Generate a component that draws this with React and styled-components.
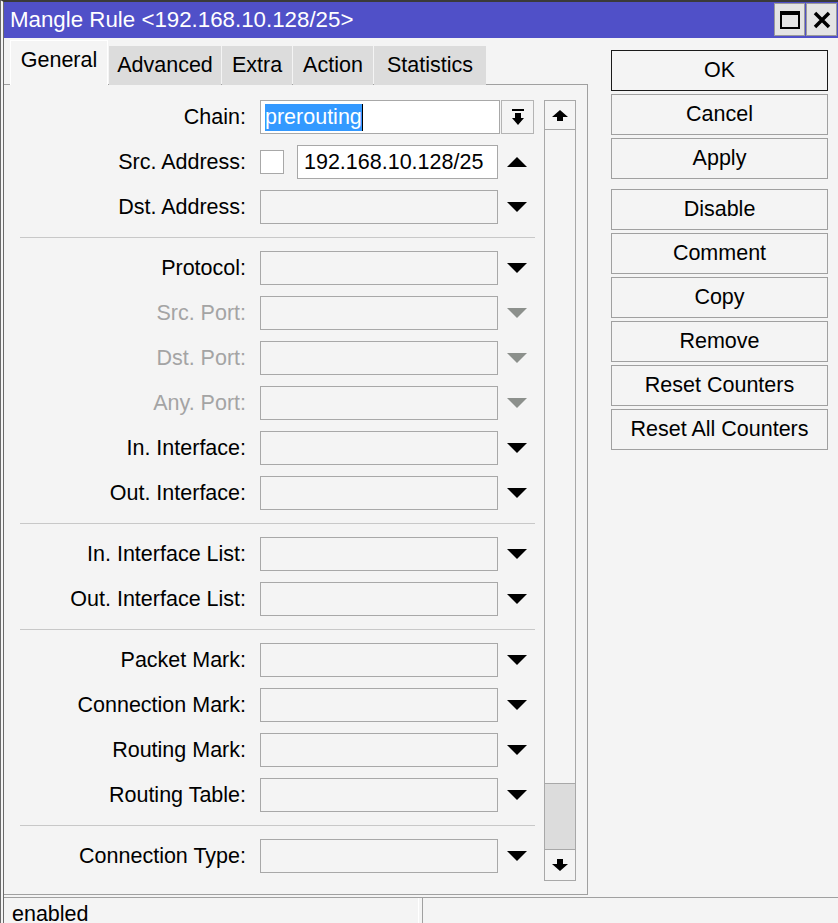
import React from 'react';
import styled, { createGlobalStyle } from 'styled-components';

const GlobalStyle = createGlobalStyle`
  html, body {
    margin: 0;
    padding: 0;
    background: #f4f4f4;
  }
  body {
    font-family: "Liberation Sans", Arial, sans-serif;
    font-size: 21.5px;
    color: #000;
  }
`;

const Window = styled.div`
  width: 838px;
  height: 923px;
  box-sizing: border-box;
  overflow: hidden;
  display: flex;
  flex-direction: column;
  background: #f4f4f4;
  border-top: 2px solid #3a3a3a;
  border-left: 4px double #6a6a6a;
`;

const TitleBar = styled.div`
  height: 36px;
  flex-shrink: 0;
  display: flex;
  align-items: center;
  background: #5050c8;
  color: #fff;
  font-size: 22.3px;
  padding-left: 6px;
`;

const TitleText = styled.span`
  white-space: nowrap;
`;

const WinButtons = styled.div`
  margin-left: auto;
  display: flex;
  gap: 1px;
  align-self: stretch;
  padding: 1px 1px 2px 0;
`;

const WinButton = styled.div`
  width: 29px;
  background: #e4e4e4;
  border: 1px solid #9a9a9a;
  display: flex;
  align-items: center;
  justify-content: center;
`;

const Body = styled.div`
  flex: none;
  display: flex;
  padding-top: 2px;
`;

const LeftCol = styled.div`
  width: 584px;
  display: flex;
  flex-direction: column;
`;

const TabBar = styled.div`
  height: 45px;
  display: flex;
  align-items: flex-end;
  gap: 1px;
  padding-left: 6px;
  margin-bottom: -1px;
`;

const Tab = styled.div`
  position: relative;
  z-index: 1;
  width: ${p => p.$w}px;
  height: ${p => (p.$active ? 45 : 39)}px;
  box-sizing: border-box;
  padding-bottom: ${p => (p.$active ? 6 : 0)}px;
  display: flex;
  align-items: center;
  justify-content: center;
  background: ${p => (p.$active ? '#f4f4f4' : '#dcdcdc')};
  border: ${p => (p.$active ? '1px solid #ffffff' : 'none')};
  border-bottom: none;
  white-space: nowrap;
`;

const Panel = styled.div`
  height: 811px;
  box-sizing: border-box;
  border: 1px solid #a0a0a0;
  border-left: none;
  display: flex;
  padding-top: 15px;
`;

const Form = styled.div`
  width: 531px;
  display: flex;
  flex-direction: column;
  gap: 11px;
`;

const Row = styled.div`
  height: 34px;
  display: flex;
  align-items: center;
`;

const Label = styled.div`
  width: 242px;
  margin-right: 14px;
  text-align: right;
  white-space: nowrap;
  color: ${p => (p.$disabled ? '#a4a4a4' : '#000')};
`;

const Field = styled.div`
  width: ${p => p.$w || 238}px;
  height: 34px;
  box-sizing: border-box;
  border: 1px solid #a8a8a8;
  background: ${p => (p.$white ? '#ffffff' : '#f4f4f4')};
  display: flex;
  align-items: center;
  padding-left: ${p => p.$pad || 0}px;
  white-space: nowrap;
`;

const Selected = styled.span`
  display: inline-block;
  height: 27px;
  line-height: 27px;
  background: #3399ff;
  color: #fff;
  border-right: 1px solid #000;
`;

const Check = styled.div`
  width: 24px;
  height: 24px;
  box-sizing: border-box;
  border: 1px solid #a8a8a8;
  background: #fff;
  margin-right: 13px;
`;

const ArrowCell = styled.div`
  width: 37px;
  display: flex;
  align-items: center;
  justify-content: center;
`;

const DropButton = styled.div`
  width: 33px;
  height: 34px;
  margin-left: 1px;
  box-sizing: border-box;
  border: 1px solid #b4b4b4;
  display: flex;
  align-items: center;
  justify-content: center;
`;

const Separator = styled.div`
  height: 1px;
  margin: 2px 0 2px 16px;
  background: #c8c8c8;
`;

const Scroll = styled.div`
  width: 32px;
  height: 781px;
  margin-left: 9px;
  box-sizing: border-box;
  border: 1px solid #a8a8a8;
  display: flex;
  flex-direction: column;
`;

const ScrollBtn = styled.div`
  height: ${p => p.$h}px;
  box-sizing: border-box;
  display: flex;
  align-items: center;
  justify-content: center;
  border-bottom: ${p => (p.$top ? '1px solid #a8a8a8' : 'none')};
`;

const Track = styled.div`
  flex: 1;
`;

const Thumb = styled.div`
  height: 67px;
  box-sizing: border-box;
  background: #dcdcdc;
  border-top: 1px solid #a8a8a8;
  border-bottom: 1px solid #a8a8a8;
`;

const RightCol = styled.div`
  margin-left: 23px;
  width: 217px;
  padding-top: 10px;
  display: flex;
  flex-direction: column;
  gap: 3px;
`;

const Button = styled.div`
  height: 41px;
  box-sizing: border-box;
  border: 1px solid ${p => (p.$default ? '#1a1a1a' : '#a0a0a0')};
  display: flex;
  align-items: center;
  justify-content: center;
  white-space: nowrap;
  margin-top: ${p => (p.$spaced ? 7 : 0)}px;
`;

const StatusBar = styled.div`
  margin-top: 2px;
  border-top: 1px solid #a0a0a0;
  flex: 1;
  display: flex;
  gap: 3px;
`;

const StatusCell = styled.div`
  width: ${p => (p.$grow ? 'auto' : '415px')};
  flex: ${p => (p.$grow ? 1 : 'none')};
  box-sizing: border-box;
  padding: 4px 0 0 8px;
  border-right: ${p => (p.$grow ? 'none' : '1px solid #ffffff')};
  border-left: ${p => (p.$grow ? '1px solid #a0a0a0' : 'none')};
  white-space: nowrap;
`;

const DownTri = ({ color = '#000' }) => (
  <svg width="20" height="10" viewBox="0 0 20 10">
    <polygon points="0,0 20,0 10,10" fill={color} />
  </svg>
);

const UpTri = () => (
  <svg width="20" height="10" viewBox="0 0 20 10">
    <polygon points="0,10 20,10 10,0" fill="#000" />
  </svg>
);

const ToBottomIcon = () => (
  <svg width="14" height="17" viewBox="0 0 14 17">
    <rect x="1" y="0" width="12" height="2" fill="#000" />
    <polygon points="4,4 10,4 10,9 13,9 7,16 1,9 4,9" fill="#000" />
  </svg>
);

const ArrowUp = () => (
  <svg width="16" height="11" viewBox="0 0 16 11">
    <polygon points="8,0 16,7 11,7 11,11 5,11 5,7 0,7" fill="#000" />
  </svg>
);

const ArrowDown = () => (
  <svg width="16" height="12" viewBox="0 0 16 12">
    <polygon points="5,0 11,0 11,5 16,5 8,12 0,5 5,5" fill="#000" />
  </svg>
);

const MaxIcon = () => (
  <svg width="20" height="20" viewBox="0 0 20 20">
    <rect x="1" y="2" width="18" height="16" fill="none" stroke="#000" strokeWidth="2" />
    <rect x="1" y="1" width="18" height="4" fill="#000" />
  </svg>
);

const CloseIcon = () => (
  <svg width="18" height="18" viewBox="0 0 18 18">
    <path d="M2 2 L16 16 M16 2 L2 16" stroke="#000" strokeWidth="3.5" />
  </svg>
);

const tabs = [
  { text: 'General', w: 98 },
  { text: 'Advanced', w: 112 },
  { text: 'Extra', w: 70 },
  { text: 'Action', w: 80 },
  { text: 'Statistics', w: 112 },
];

const rows = [
  { kind: 'chain', label: 'Chain:' },
  { kind: 'src', label: 'Src. Address:' },
  { label: 'Dst. Address:' },
  { kind: 'sep' },
  { label: 'Protocol:' },
  { label: 'Src. Port:', disabled: true },
  { label: 'Dst. Port:', disabled: true },
  { label: 'Any. Port:', disabled: true },
  { label: 'In. Interface:' },
  { label: 'Out. Interface:' },
  { kind: 'sep' },
  { label: 'In. Interface List:' },
  { label: 'Out. Interface List:' },
  { kind: 'sep' },
  { label: 'Packet Mark:' },
  { label: 'Connection Mark:' },
  { label: 'Routing Mark:' },
  { label: 'Routing Table:' },
  { kind: 'sep' },
  { label: 'Connection Type:' },
];

const buttons = [
  { text: 'OK', isDefault: true },
  { text: 'Cancel' },
  { text: 'Apply' },
  { text: 'Disable', spaced: true },
  { text: 'Comment' },
  { text: 'Copy' },
  { text: 'Remove' },
  { text: 'Reset Counters' },
  { text: 'Reset All Counters' },
];

const FormRow = ({ row }) => {
  if (row.kind === 'sep') return <Separator />;
  if (row.kind === 'chain') {
    return (
      <Row>
        <Label>{row.label}</Label>
        <Field $w={240} $white $pad={4}>
          <Selected>prerouting</Selected>
        </Field>
        <DropButton>
          <ToBottomIcon />
        </DropButton>
      </Row>
    );
  }
  if (row.kind === 'src') {
    return (
      <Row>
        <Label>{row.label}</Label>
        <Check />
        <Field $w={201} $white $pad={6}>
          192.168.10.128/25
        </Field>
        <ArrowCell>
          <UpTri />
        </ArrowCell>
      </Row>
    );
  }
  return (
    <Row>
      <Label $disabled={row.disabled}>{row.label}</Label>
      <Field />
      <ArrowCell>
        <DownTri color={row.disabled ? '#8c908c' : '#000'} />
      </ArrowCell>
    </Row>
  );
};

export default function App() {
  return (
    <>
      <GlobalStyle />
      <Window>
        <TitleBar>
          <TitleText>Mangle Rule &lt;192.168.10.128/25&gt;</TitleText>
          <WinButtons>
            <WinButton>
              <MaxIcon />
            </WinButton>
            <WinButton>
              <CloseIcon />
            </WinButton>
          </WinButtons>
        </TitleBar>
        <Body>
          <LeftCol>
            <TabBar>
              {tabs.map((t, i) => (
                <Tab key={t.text} $w={t.w} $active={i === 0}>
                  {t.text}
                </Tab>
              ))}
            </TabBar>
            <Panel>
              <Form>
                {rows.map((r, i) => (
                  <FormRow key={i} row={r} />
                ))}
              </Form>
              <Scroll>
                <ScrollBtn $h={29} $top>
                  <ArrowUp />
                </ScrollBtn>
                <Track />
                <Thumb />
                <ScrollBtn $h={30}>
                  <ArrowDown />
                </ScrollBtn>
              </Scroll>
            </Panel>
          </LeftCol>
          <RightCol>
            {buttons.map(b => (
              <Button key={b.text} $default={b.isDefault} $spaced={b.spaced}>
                {b.text}
              </Button>
            ))}
          </RightCol>
        </Body>
        <StatusBar>
          <StatusCell>enabled</StatusCell>
          <StatusCell $grow />
        </StatusBar>
      </Window>
    </>
  );
}
